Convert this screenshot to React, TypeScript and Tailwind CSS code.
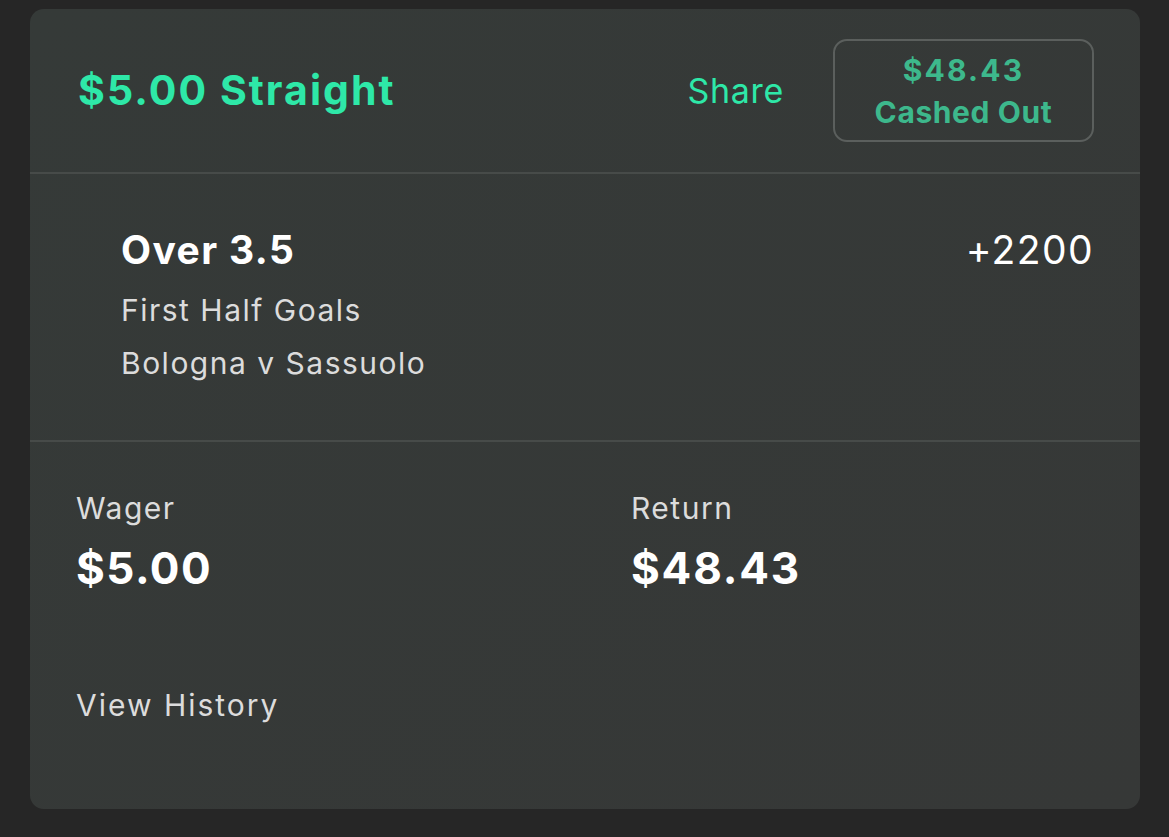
export default function App() {
  return (
    <div className="min-h-[837px] w-full bg-[#262626] pt-[9px] pl-[30px] font-['Inter','Liberation_Sans',sans-serif]">
      <div className="w-[1110px] h-[800px] rounded-[14px] bg-gradient-to-br from-[#353a38] to-[#363837] overflow-hidden flex flex-col">
        {/* header */}
        <div className="h-[163px] flex items-center justify-between pl-[48px] pr-[46px]">
          <h1 className="text-[41px] font-bold text-[#2ee8a8] tracking-[0.05em]">$5.00 Straight</h1>
          <div className="flex items-center gap-[49px]">
            <span className="text-[34px] text-[#2ee8a8] tracking-[0.02em]">Share</span>
            <button className="w-[261px] h-[103px] rounded-[14px] border-2 border-[#5b5f5d] flex flex-col items-center justify-center text-[#3db88c] font-bold text-[30px] leading-[42px]">
              <span className="tracking-[2.2px]">$48.43</span>
              <span className="tracking-[0.6px]">Cashed Out</span>
            </button>
          </div>
        </div>
        <div className="h-[2px] bg-[#474b49]" />

        {/* selection */}
        <div className="flex justify-between pl-[91px] pr-[47px] pt-[54px] pb-[50px]">
          <div className="flex flex-col">
            <span className="text-[39px] leading-[44px] font-bold text-white tracking-[1.4px]">Over 3.5</span>
            <span className="mt-[12px] text-[30px] leading-[53px] text-[#dcdcdc] tracking-[1.5px]">First Half Goals</span>
            <span className="text-[30px] leading-[53px] text-[#dcdcdc] tracking-[1.5px]">Bologna v Sassuolo</span>
          </div>
          <span className="text-[39px] leading-[44px] text-white tracking-[1.4px] -mr-[1px]">+2200</span>
        </div>
        <div className="h-[2px] bg-[#474b49]" />

        {/* totals */}
        <div className="flex flex-col pl-[46px] pt-[46px]">
          <div className="flex">
            <div className="w-[555px] flex flex-col">
              <span className="text-[30px] leading-[40px] text-[#dcdcdc] tracking-[1.5px]">Wager</span>
              <span className="mt-[15px] text-[44px] leading-[50px] font-bold text-white tracking-[1.5px]">$5.00</span>
            </div>
            <div className="flex flex-col">
              <span className="text-[30px] leading-[40px] text-[#dcdcdc] tracking-[1.5px]">Return</span>
              <span className="mt-[15px] text-[44px] leading-[50px] font-bold text-white tracking-[1.8px]">$48.43</span>
            </div>
          </div>
          <span className="mt-[92px] text-[30px] leading-[40px] text-[#dcdcdc] tracking-[2px]">View History</span>
        </div>
      </div>
    </div>
  );
}
